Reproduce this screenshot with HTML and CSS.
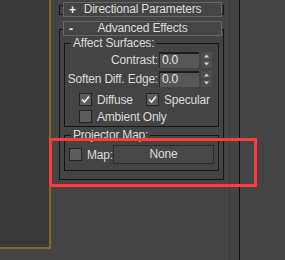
FILE: index.html
```html
<!DOCTYPE html>
<html lang="en">

<head>
  <meta charset="UTF-8">
  <title>Advanced Effects</title>
  <link rel="stylesheet" href="styles.css">
</head>

<body>
  <div class="screen">
    <div class="viewport"></div>

    <div class="panel">
      <div class="rollout collapsed">
        <div class="rollout-head">
          <span class="sign">+</span>
          <span class="title">Directional Parameters</span>
        </div>
      </div>

      <div class="rollout open">
        <div class="rollout-head">
          <span class="sign">-</span>
          <span class="title">Advanced Effects</span>
        </div>

        <fieldset class="group affect">
          <legend>Affect Surfaces:</legend>

          <div class="spin-row">
            <label>Contrast:</label>
            <div class="spin-input">0.0</div>
            <div class="spinner">
              <svg width="11" height="16" viewBox="0 0 11 16">
                <rect x="0" y="0" width="11" height="7.5" fill="#4f4f4f" />
                <rect x="0" y="8.5" width="11" height="7.5" fill="#4f4f4f" />
                <path d="M3 5.5 L5.5 2.5 L8 5.5 Z" fill="#d8d8d8" />
                <path d="M3 10.5 L8 10.5 L5.5 13.5 Z" fill="#d8d8d8" />
              </svg>
            </div>
          </div>

          <div class="spin-row">
            <label>Soften Diff. Edge:</label>
            <div class="spin-input">0.0</div>
            <div class="spinner">
              <svg width="11" height="16" viewBox="0 0 11 16">
                <rect x="0" y="0" width="11" height="7.5" fill="#4f4f4f" />
                <rect x="0" y="8.5" width="11" height="7.5" fill="#4f4f4f" />
                <path d="M3 5.5 L5.5 2.5 L8 5.5 Z" fill="#d8d8d8" />
                <path d="M3 10.5 L8 10.5 L5.5 13.5 Z" fill="#d8d8d8" />
              </svg>
            </div>
          </div>

          <div class="check-grid">
            <div class="check-item">
              <span class="box checked">
                <svg width="11" height="11" viewBox="0 0 11 11">
                  <path d="M2 5.5 L4.5 8 L9 2.5" fill="none" stroke="#f0f0f0" stroke-width="1.6" />
                </svg>
              </span>
              Diffuse
            </div>
            <div class="check-item">
              <span class="box checked">
                <svg width="11" height="11" viewBox="0 0 11 11">
                  <path d="M2 5.5 L4.5 8 L9 2.5" fill="none" stroke="#f0f0f0" stroke-width="1.6" />
                </svg>
              </span>
              Specular
            </div>
            <div class="check-item">
              <span class="box"></span>
              Ambient Only
            </div>
          </div>
        </fieldset>

        <fieldset class="group projector">
          <legend>Projector Map:</legend>
          <div class="map-row">
            <span class="box"></span>
            <span class="map-label">Map:</span>
            <div class="map-button">None</div>
          </div>
        </fieldset>
      </div>
    </div>

    <div class="edge-soft"></div>
    <div class="edge-dark"></div>
  </div>

  <!-- annotation box drawn over the screenshot -->
  <div class="highlight"></div>
</body>

</html>
```

FILE: styles.css
```css
body {
  margin: 0;
  background: #444444;
  color: #dcdcdc;
  font-family: 'Liberation Sans', Arial, sans-serif;
  font-size: 12px;
  letter-spacing: -0.2px;
  white-space: nowrap;
  overflow: hidden;
}

.screen {
  display: flex;
  align-items: flex-start;
  height: 260px;
}

.viewport {
  width: 49px;
  height: 247px;
  background: #383838;
  border-right: 2px solid #7d6a2c;
  border-bottom: 2px solid #7d6a2c;
  flex-shrink: 0;
}

.panel {
  width: 165px;
  margin-left: 8px;
  flex-shrink: 0;
}

.rollout {
  border: 1px solid #151515;
  box-sizing: border-box;
}

.rollout.collapsed {
  margin-top: 5px;
  height: 10px;
}

.rollout.open {
  margin-top: 14px;
  padding-bottom: 8px;
}

.rollout-head {
  display: flex;
  align-items: center;
  position: relative;
  height: 15px;
  box-sizing: border-box;
  background: #454545;
  border: 1px solid #666666;
  margin: -4px 1px 0 3px;
}

.rollout.open .rollout-head {
  margin-top: -9px;
}

.rollout-head .sign {
  width: 12px;
  padding-left: 5px;
  font-weight: bold;
  color: #f0f0f0;
}

.rollout-head .title {
  flex: 1;
  text-align: center;
  padding-right: 17px;
  line-height: 13px;
}

/* group boxes */
.group {
  margin: 0 4px;
  padding: 0 0 0 6px;
  border: 1px solid #151515;
  min-width: 0;
}

.group legend {
  padding: 0 2px;
  line-height: 14px;
}

.group.affect {
  padding-bottom: 3px;
}

.group.projector {
  margin-top: 1px;
  padding-bottom: 6px;
}

.spin-row {
  display: flex;
  align-items: center;
  justify-content: flex-end;
  height: 16px;
  padding-right: 6px;
  margin-top: 3px;
}

.spin-row:first-of-type {
  margin-top: 2px;
}

.spin-row label {
  flex-shrink: 0;
  margin-right: 1px;
}

.spin-input {
  flex-shrink: 0;
  width: 40px;
  height: 16px;
  box-sizing: border-box;
  background: #575757;
  border-top: 2px solid #1c1c1c;
  border-left: 1px solid #2a2a2a;
  padding-left: 2px;
  line-height: 13px;
  color: #e4e4e4;
}

.spinner {
  flex-shrink: 0;
  width: 11px;
  height: 16px;
  margin-left: 2px;
}

.spinner svg {
  display: block;
}

.check-grid {
  display: grid;
  grid-template-columns: 67px auto;
  row-gap: 4px;
  padding-left: 8px;
  margin-top: 6px;
}

.check-item {
  display: flex;
  align-items: center;
  gap: 5px;
  height: 13px;
}

.box {
  display: inline-block;
  width: 13px;
  height: 13px;
  box-sizing: border-box;
  background: #5c5c5c;
  border: 1px solid #222222;
  flex-shrink: 0;
}

.box svg {
  display: block;
}

.map-row {
  display: flex;
  align-items: center;
  height: 19px;
  margin-top: 3px;
  margin-left: -2px;
}

.map-label {
  margin-left: 5px;
  width: 26px;
}

.map-button {
  width: 101px;
  height: 19px;
  box-sizing: border-box;
  border: 1px solid #2b2b2b;
  background: #474747;
  text-align: center;
  line-height: 17px;
}

.edge-soft {
  width: 1px;
  height: 260px;
  margin-left: 5px;
  background: #3b3b3b;
}

.edge-dark {
  width: 1px;
  height: 260px;
  margin-left: 9px;
  background: #0e0e0e;
}

.highlight {
  position: absolute;
  left: 49px;
  top: 138px;
  width: 208px;
  height: 49px;
  box-sizing: border-box;
  border: 3px solid #ff3a3a;
}
```
